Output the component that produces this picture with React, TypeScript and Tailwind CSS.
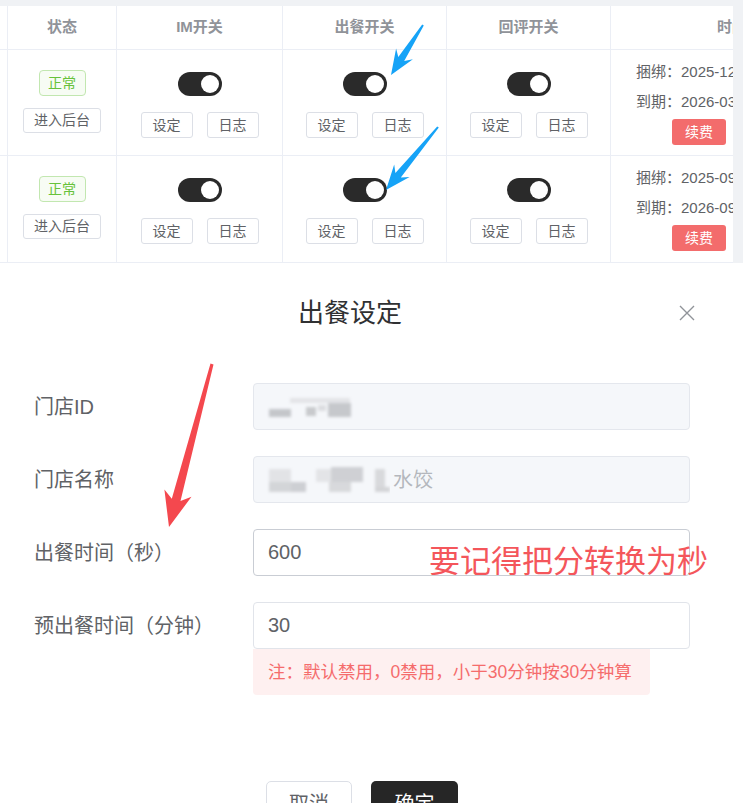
import React from "react";

type P = [number, number];

function arrowPoints(
  tail: P,
  tip: P,
  headLen: number,
  headHalf: number,
  neckLen: number,
  neckHalf: number,
  tailHalf: number
): string {
  const dx = tip[0] - tail[0];
  const dy = tip[1] - tail[1];
  const L = Math.hypot(dx, dy);
  const ux = dx / L;
  const uy = dy / L;
  const nx = -uy;
  const ny = ux;
  const at = (d: number, w: number) =>
    `${(tip[0] - ux * d + nx * w).toFixed(1)},${(tip[1] - uy * d + ny * w).toFixed(1)}`;
  return [
    `${(tail[0] + nx * tailHalf).toFixed(1)},${(tail[1] + ny * tailHalf).toFixed(1)}`,
    at(neckLen, neckHalf),
    at(headLen, headHalf),
    `${tip[0]},${tip[1]}`,
    at(headLen, -headHalf),
    at(neckLen, -neckHalf),
    `${(tail[0] - nx * tailHalf).toFixed(1)},${(tail[1] - ny * tailHalf).toFixed(1)}`,
  ].join(" ");
}

function Toggle() {
  return (
    <div className="w-[44px] h-[24px] rounded-full bg-[#2a2a2a] flex items-center justify-end pr-[3px]">
      <div className="w-[18px] h-[18px] rounded-full bg-white" />
    </div>
  );
}

function SmallBtn({ children }: { children: React.ReactNode }) {
  return (
    <div className="w-[52px] h-[26px] rounded-[3px] border border-[#dcdfe6] bg-white flex items-center justify-center text-[14px] text-[#606266]">
      {children}
    </div>
  );
}

function SwitchCell({ w }: { w: string }) {
  return (
    <div className={`${w} shrink-0 border-r border-[#ebeef5] flex flex-col items-center pt-[22px]`}>
      <Toggle />
      <div className="mt-[16px] flex gap-[14px]">
        <SmallBtn>设定</SmallBtn>
        <SmallBtn>日志</SmallBtn>
      </div>
    </div>
  );
}

function Row({ h, bind, expire }: { h: string; bind: string; expire: string }) {
  return (
    <div className={`flex ${h} border-b border-[#ebeef5]`}>
      <div className="w-[8px] shrink-0 border-r border-[#ebeef5]" />
      <div className="w-[109px] shrink-0 border-r border-[#ebeef5] flex flex-col items-center pt-[20px]">
        <div className="w-[47px] h-[26px] rounded-[4px] border border-[#c2e7b0] bg-[#f7fcf4] flex items-center justify-center text-[14px] text-[#67c23a]">
          正常
        </div>
        <div className="mt-[12px] w-[78px] h-[25px] rounded-[3px] border border-[#dcdfe6] flex items-center justify-center text-[14px] text-[#606266]">
          进入后台
        </div>
      </div>
      <SwitchCell w="w-[166px]" />
      <SwitchCell w="w-[164px]" />
      <SwitchCell w="w-[164px]" />
      <div className="flex-1 overflow-hidden pt-[7px] pl-[25px] text-[15px] leading-[30px] text-[#606266] whitespace-nowrap">
        <div>{bind}</div>
        <div>{expire}</div>
        <div className="mt-[2px] ml-[36px] w-[54px] h-[26px] rounded-[3px] bg-[#f36c6c] flex items-center justify-center text-[14px] leading-none text-white">
          续费
        </div>
      </div>
    </div>
  );
}

function HeaderCell({ w, children }: { w: string; children?: React.ReactNode }) {
  return (
    <div className={`${w} shrink-0 border-r border-[#ebeef5] flex items-center justify-center text-[15px] font-bold text-[#909399]`}>
      {children}
    </div>
  );
}

function FormRow({ label, children }: { label: string; children: React.ReactNode }) {
  return (
    <div className="flex items-center">
      <div className="w-[253px] shrink-0 pl-[34px] text-[20px] text-[#606266]">{label}</div>
      {children}
    </div>
  );
}

export default function App() {
  return (
    <div className="relative w-[743px] h-[803px] overflow-hidden bg-white font-['Liberation_Sans','Noto_Sans_CJK_SC',sans-serif]">
      {/* table */}
      <div className="bg-[#f0f2f5] pt-[6px] h-[263px]">
        <div className="w-[733px] bg-white overflow-hidden">
          <div className="flex h-[44px] border-b border-[#ebeef5]">
            <HeaderCell w="w-[8px]" />
            <HeaderCell w="w-[109px]">状态</HeaderCell>
            <HeaderCell w="w-[166px]">IM开关</HeaderCell>
            <HeaderCell w="w-[164px]">出餐开关</HeaderCell>
            <HeaderCell w="w-[164px]">回评开关</HeaderCell>
            <div className="flex-1 overflow-hidden flex items-center pl-[106px] text-[15px] font-bold text-[#909399] whitespace-nowrap">
              时间
            </div>
          </div>
          <Row h="h-[106px]" bind="捆绑：2025-12-18 14:32:09" expire="到期：2026-03-18 14:32:09" />
          <Row h="h-[107px]" bind="捆绑：2025-09-02 10:15:27" expire="到期：2026-09-02 10:15:27" />
        </div>
      </div>

      {/* dialog */}
      <div className="w-[743px]">
        <div className="relative w-[700px] mt-[32px] flex justify-center">
          <div className="text-[26px] leading-[36px] text-[#303133]">出餐设定</div>
          <div className="absolute left-[678px] top-[10px]">
            <svg width="18" height="16" viewBox="0 0 18 16">
              <path d="M2 1 L16 15 M16 1 L2 15" stroke="#909399" strokeWidth="1.4" fill="none" />
            </svg>
          </div>
        </div>

        <div className="mt-[52px] flex flex-col gap-[26px]">
          <FormRow label="门店ID">
            <div className="w-[437px] h-[47px] rounded-[4px] border border-[#e4e7ed] bg-[#f5f7fa] flex items-center pl-[12px]">
              <svg width="100" height="28" viewBox="0 0 100 28">
                <defs>
                  <filter id="b1" x="-20%" y="-50%" width="140%" height="200%">
                    <feGaussianBlur stdDeviation="1.8" />
                  </filter>
                </defs>
                <g filter="url(#b1)">
                  <rect x="24" y="5" width="60" height="5" fill="#e3e4e7" />
                  <rect x="3" y="16" width="22" height="8" fill="#c4c6ca" />
                  <rect x="40" y="14" width="10" height="9" fill="#c8cacd" />
                  <rect x="52" y="12" width="8" height="6" fill="#dcdde0" />
                  <rect x="62" y="10" width="23" height="14" fill="#c6c8cc" />
                </g>
              </svg>
            </div>
          </FormRow>
          <FormRow label="门店名称">
            <div className="w-[437px] h-[47px] rounded-[4px] border border-[#e4e7ed] bg-[#f5f7fa] flex items-center pl-[12px]">
              <svg width="124" height="32" viewBox="0 0 124 32">
                <defs>
                  <filter id="b2" x="-20%" y="-50%" width="140%" height="200%">
                    <feGaussianBlur stdDeviation="1.8" />
                  </filter>
                </defs>
                <g filter="url(#b2)">
                  <rect x="3" y="5" width="22" height="13" fill="#e2e3e6" />
                  <rect x="3" y="18" width="22" height="10" fill="#d3d5d8" />
                  <rect x="25" y="18" width="15" height="10" fill="#cdcfd3" />
                  <rect x="50" y="5" width="25" height="13" fill="#e3e4e7" />
                  <rect x="65" y="3" width="32" height="15" fill="#cfd0d4" />
                  <rect x="63" y="18" width="22" height="10" fill="#d8d9dc" />
                  <rect x="109" y="5" width="10" height="23" fill="#d8d9dc" />
                  <rect x="109" y="23" width="15" height="5" fill="#d3d4d7" />
                </g>
              </svg>
              <span className="ml-[3px] text-[20px] text-[#b4b7bd]">水饺</span>
            </div>
          </FormRow>
          <FormRow label="出餐时间（秒）">
            <input
              readOnly
              value="600"
              className="w-[437px] h-[47px] rounded-[4px] border border-[#c9cdd4] bg-white px-[14px] text-[20px] text-[#606266] outline-none"
            />
          </FormRow>
          <div className="flex flex-col">
            <FormRow label="预出餐时间（分钟）">
              <input
                readOnly
                value="30"
                className="w-[437px] h-[47px] rounded-[4px] border border-[#e1e4ea] bg-white px-[14px] text-[20px] text-[#606266] outline-none"
              />
            </FormRow>
            <div className="ml-[253px] w-[397px] h-[46px] rounded-b-[4px] bg-[#fef0f0] flex items-center px-[15px] text-[17.5px] text-[#f56c6c] whitespace-nowrap">
              注：默认禁用，0禁用，小于30分钟按30分钟算
            </div>
          </div>
        </div>

        <div className="mt-[86px] ml-[266px] flex gap-[19px]">
          <div className="w-[86px] h-[46px] rounded-[5px] border border-[#dcdfe6] bg-white flex items-center justify-center text-[20px] text-[#606266]">
            取消
          </div>
          <div className="w-[87px] h-[46px] rounded-[5px] bg-[#262626] flex items-center justify-center text-[20px] text-white">
            确定
          </div>
        </div>
      </div>

      {/* annotations */}
      <div className="absolute left-[429px] top-[541px] text-[31px] leading-[36px] text-[#f4565b] whitespace-nowrap font-['Noto_Sans_CJK_SC',sans-serif]">
        要记得把分转换为秒
      </div>
      <svg className="absolute left-0 top-0 pointer-events-none" width="743" height="803" viewBox="0 0 743 803">
        <polygon points={arrowPoints([423, 25], [391, 75], 25, 10, 19, 3.5, 1)} fill="#16a3f7" />
        <polygon points={arrowPoints([438, 127], [386, 190], 25, 10, 19, 3.5, 1)} fill="#16a3f7" />
        <polygon points={arrowPoints([212, 364], [169, 527], 35, 14, 28, 4.5, 1.5)} fill="#f4484e" />
      </svg>
    </div>
  );
}
